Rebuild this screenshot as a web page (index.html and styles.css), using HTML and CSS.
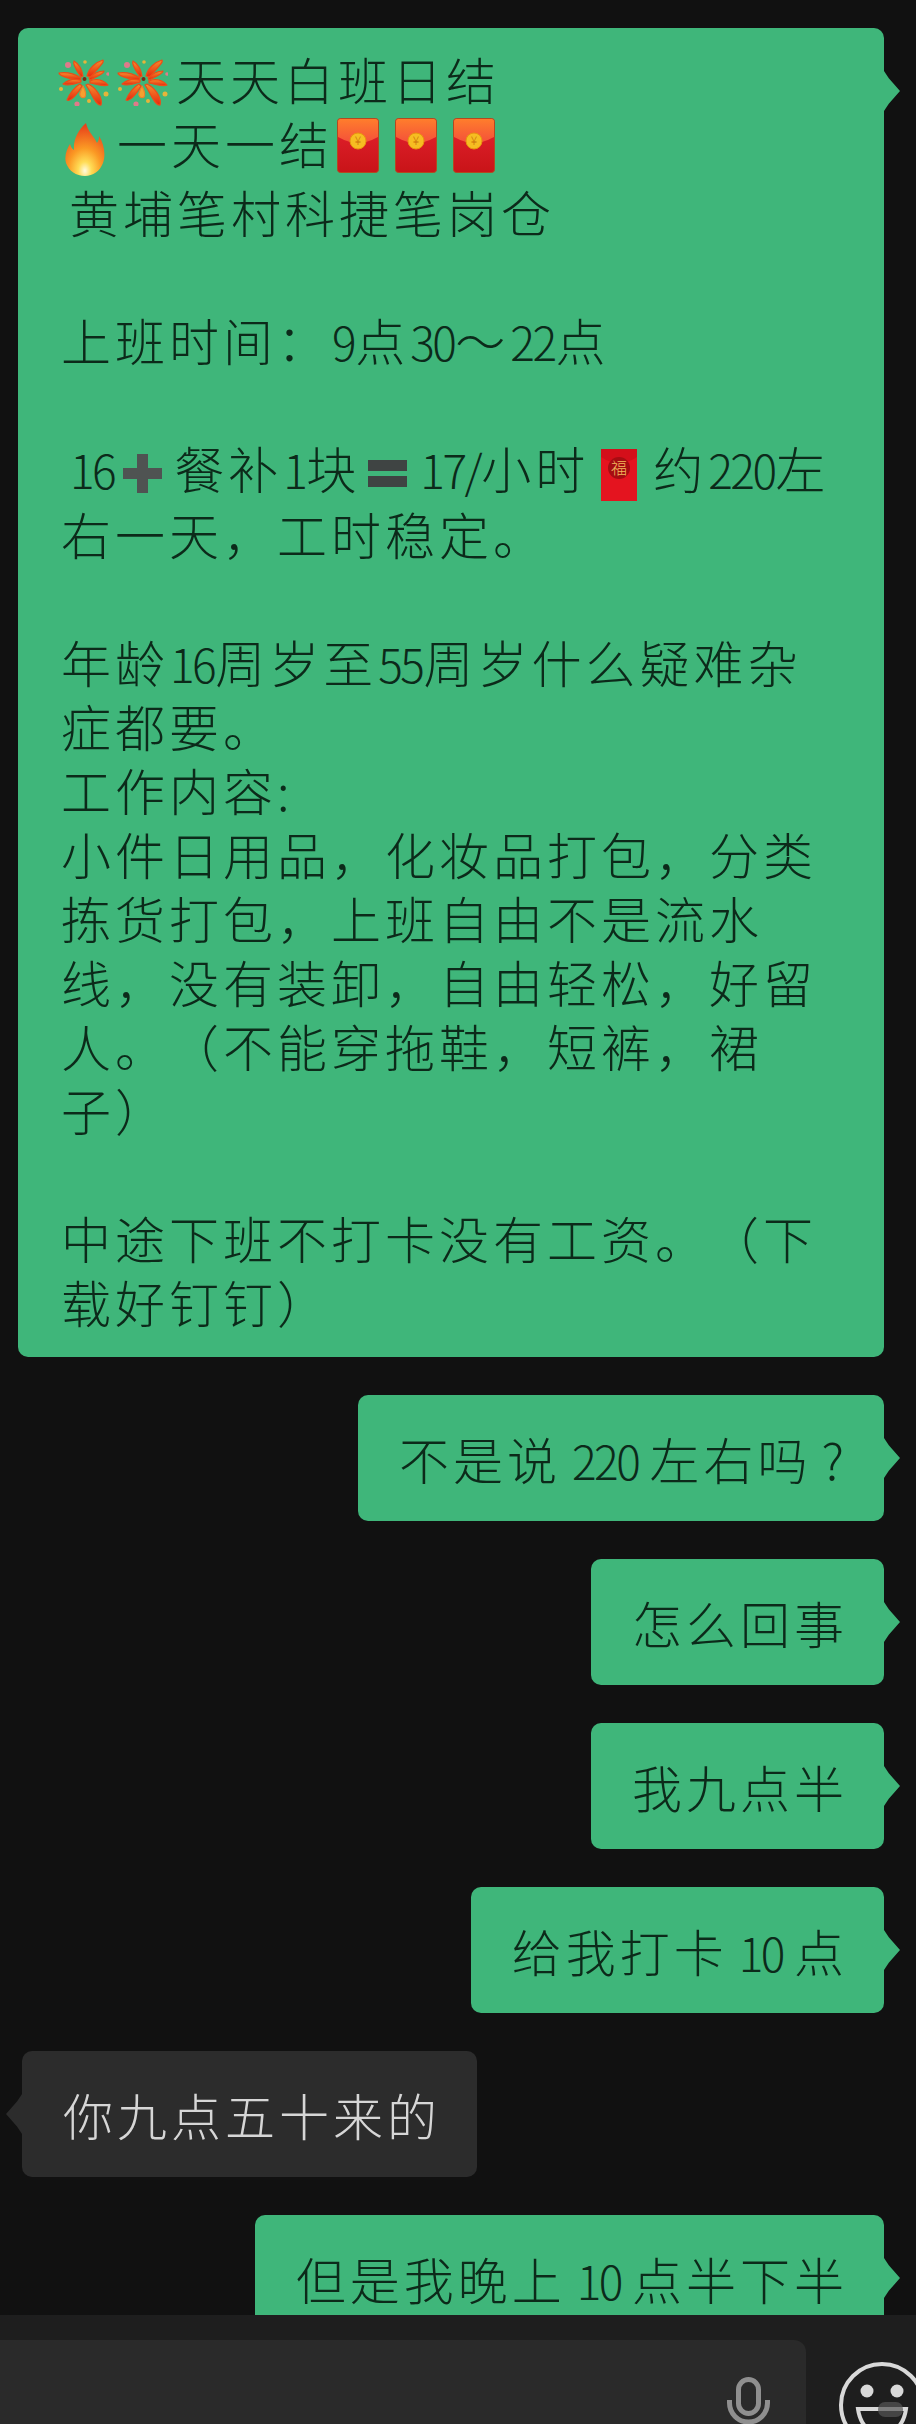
FILE: index.html
```html
<!DOCTYPE html>
<html lang="zh-CN">
<head>
<meta charset="utf-8" />
<meta name="viewport" content="width=device-width, initial-scale=1" />
<title>聊天</title>
<link rel="stylesheet" href="styles.css">
</head>
<body>
<svg class="defs" width="0" height="0" aria-hidden="true">
<defs>
<linearGradient id="petal" x1="0" y1="0" x2="0" y2="1">
<stop offset="0" stop-color="#f7902c"/>
<stop offset="1" stop-color="#e5260f"/>
</linearGradient>
<radialGradient id="fire" cx="0.5" cy="0.9" r="0.85">
<stop offset="0" stop-color="#fffbe0"/>
<stop offset="0.2" stop-color="#ffdc55"/>
<stop offset="0.5" stop-color="#fb9a24"/>
<stop offset="1" stop-color="#e8421b"/>
</radialGradient>
<linearGradient id="flap" x1="0" y1="0" x2="0" y2="1">
<stop offset="0" stop-color="#ff7d2c"/>
<stop offset="1" stop-color="#f4503a"/>
</linearGradient>
<linearGradient id="pocket" x1="0" y1="0" x2="0" y2="1">
<stop offset="0" stop-color="#e5222f"/>
<stop offset="1" stop-color="#c81418"/>
</linearGradient>
<symbol id="fireworks" viewBox="0 0 51 47">
<g fill="url(#petal)" stroke="#ec4d18" stroke-width="1.200" stroke-linejoin="round">
<path d="M29 17C31 9 38 3 45 1C47 4 39 9 33 18Z"/>
<path d="M31 19C35 15 41 12 46 12C46 15 38 18 32 21Z"/>
<path d="M32 22C38 19 46 21 50 26C46 28 39 25 32 24Z"/>
<path d="M30 25C37 28 45 38 43 46C38 47 34 35 28 26Z"/>
<path d="M25 27C27 31 29 35 27 38C24 40 21 37 22 34C23 31 24 29 25 27Z" fill="#f5a030" stroke="#f0802a"/>
<path d="M22 25C17 28 12 34 9 41C13 43 20 34 24 27Z"/>
<path d="M23 21C17 19 10 21 5 25C9 27 17 25 23 23Z"/>
<path d="M23 19C17 15 8 13 1 14C2 18 14 20 22 21Z"/>
<path d="M25 17C24 11 21 5 16 2C14 5 19 12 23 18Z"/>
</g>
<circle cx="26.500" cy="20" r="2" fill="#7a2a14"/>
<g fill="#e07a8a">
<circle cx="10" cy="6" r="3"/>
<circle cx="19" cy="45" r="2.600"/>
<circle cx="50" cy="15" r="1.800"/>
</g>
<g fill="#e5b53a">
<circle cx="27" cy="3" r="1.800"/>
<circle cx="3" cy="30" r="2"/>
<circle cx="48" cy="35" r="2.500"/>
<circle cx="31" cy="42" r="2"/>
</g>
</symbol>
<symbol id="flame" viewBox="0 0 40 53">
<path d="M21 0C23 9 29 13 32 20C34 17 34 15 34 13C39 21 41 31 38 40C35 48 28 53 20 53C11 53 4 48 1 40C-1 33 2 26 5 21C6 24 7 26 9 27C8 17 13 7 21 0Z" fill="url(#fire)"/>
</symbol>
<symbol id="envelope" viewBox="0 0 42 55">
<rect x="0.500" y="0.500" width="41" height="54" rx="3" fill="url(#pocket)" stroke="#b4481f"/>
<path d="M1 3.500Q1 1 3.500 1H38.500Q41 1 41 3.500V19Q30 25 21 25Q12 25 1 19Z" fill="url(#flap)"/>
<circle cx="21" cy="23" r="8" fill="#f6bd22" stroke="#e8940f"/>
<text x="21" y="27" class="coin-mark">¥</text>
</symbol>
</defs>
</svg>

<main class="chat">
<div class="bubble bubble-me bubble-long">
<p class="msg">
<svg class="emoji firework"><use href="#fireworks"/></svg><svg class="emoji firework"><use href="#fireworks"/></svg>天天白班日结<br>
<svg class="emoji flame"><use href="#flame"/></svg>一天一结<svg class="emoji packet"><use href="#envelope"/></svg><svg class="emoji packet"><use href="#envelope"/></svg><svg class="emoji packet"><use href="#envelope"/></svg><br>
<span class="indent">黄埔笔村科捷笔岗仓</span><br>
<br>
上班时间：<span class="num">9</span>点<span class="num">30</span>～<span class="num">22</span>点<br>
<br>
<span class="indent"><span class="num">16</span></span><svg class="sign" viewBox="0 0 39 39"><path d="M14 0h11v14h14v11H25v14H14V25H0V14h14z" fill="#4f5352"/></svg>餐补<span class="num">1</span>块<svg class="sign" viewBox="0 0 39 39"><path d="M0 6h39v11H0zM0 22h39v11H0z" fill="#3f4443"/></svg><span class="num">17/</span>小时<svg class="emoji fu" viewBox="0 0 36 52"><rect width="36" height="52" fill="#e4141f"/><path d="M0 0H36V8Q18 20 0 8Z" fill="#d40f1a"/><circle cx="18" cy="19" r="11" fill="#a60d12"/><text x="18" y="25" class="fu-mark">福</text></svg>约<span class="num">220</span>左<br>
右一天，工时稳定。<br>
<br>
年龄<span class="num">16</span>周岁至<span class="num">55</span>周岁什么疑难杂<br>
症都要。<br>
工作内容:<br>
小件日用品，化妆品打包，分类<br>
拣货打包，上班自由不是流水<br>
线，没有装卸，自由轻松，好留<br>
人。（不能穿拖鞋，短裤，裙<br>
子）<br>
<br>
中途下班不打卡没有工资。（下<br>
载好钉钉）
</p>
</div>
<div class="bubble bubble-me"><p class="msg">不是说 <span class="num">220</span> 左右吗 ?</p></div>
<div class="bubble bubble-me"><p class="msg">怎么回事</p></div>
<div class="bubble bubble-me"><p class="msg">我九点半</p></div>
<div class="bubble bubble-me"><p class="msg">给我打卡 <span class="num">10</span> 点</p></div>
<div class="bubble bubble-them"><p class="msg">你九点五十来的</p></div>
<div class="bubble bubble-me"><p class="msg">但是我晚上 <span class="num">10</span> 点半下半</p></div>
</main>

<footer class="input-bar">
<div class="input-box">
<svg class="mic" viewBox="0 0 44 47" width="44" height="47"><rect x="11.500" y="2.500" width="20" height="34" rx="10"/><path d="M2.500 23v3a19 19 0 0 0 38 0v-3"/></svg>
</div>
<svg class="smile" viewBox="0 0 86 86" width="86" height="86">
<circle cx="43" cy="43" r="41"/>
<circle class="eye" cx="28" cy="29" r="6.500"/>
<circle class="eye" cx="58" cy="29" r="6.500"/>
<path d="M19 47H67C65 62 56 72 43 72C30 72 21 62 19 47Z"/>
<rect class="smudge" x="39" y="40" width="25" height="15" rx="7"/>
</svg>
</footer>
</body>
</html>
```

FILE: styles.css
```css
:root {
  --color-bg: #111111;
  --color-me: #3fb67a;
  --color-them: #2c2c2c;
  --color-bar: #1e1e1e;
  --color-input: #2a2a2a;
}
* {
  box-sizing: border-box;
}
html, body {
  height: 100%;
}
body {
  margin: 0;
  height: 2424px;
  overflow: hidden;
  display: flex;
  flex-direction: column;
  background-color: var(--color-bg);
  font-family: "Noto Sans CJK TC", "Noto Sans CJK SC", sans-serif;
  font-weight: 300;
}
.defs {
  position: absolute;
}
.chat {
  flex: 1;
  min-height: 0;
  overflow: hidden;
  display: flex;
  flex-direction: column;
  align-items: flex-start;
  gap: 38px;
  padding-top: 28px;
}
.bubble {
  position: relative;
  flex: none;
  display: flex;
  align-items: center;
  min-height: 126px;
  padding: 18px 36px 18px 41px;
  border-radius: 10px;
}
.bubble::after {
  content: "";
  position: absolute;
  top: 43px;
  width: 16px;
  height: 40px;
  background: inherit;
}
.bubble-me {
  align-self: flex-end;
  margin-right: 32px;
  background-color: var(--color-me);
  color: #0c2a1a;
}
.bubble-me::after {
  left: 100%;
  clip-path: polygon(0 0, 30% 18%, 100% 50%, 30% 82%, 0 100%);
}
.bubble-them {
  margin-left: 22px;
  background-color: var(--color-them);
  color: #d6d6d6;
}
.bubble-them::after {
  right: 100%;
  clip-path: polygon(100% 0, 70% 18%, 0 50%, 70% 82%, 100% 100%);
}
.bubble-long {
  width: 866px;
  padding: 18px 36px 24px 43px;
}
.msg {
  margin: 0;
  font-size: 50px;
  line-height: 64px;
  letter-spacing: 4px;
  word-spacing: -5px;
  white-space: nowrap;
  text-spacing-trim: space-all;
}
.num {
  display: inline-block;
  margin: 0 1px;
  font-size: 46px;
  line-height: 1;
  letter-spacing: -2.500px;
}
.indent {
  display: inline-block;
  margin-left: 8px;
  line-height: 1;
}
.emoji {
  display: inline-block;
}
.firework {
  width: 51px;
  height: 47px;
  margin: 0 8px 0 -3px;
  vertical-align: -6px;
}
.firework + .firework {
  margin-left: 0;
}
.flame {
  width: 40px;
  height: 53px;
  margin: 0 12px 0 4px;
  vertical-align: -12px;
}
.packet {
  width: 42px;
  height: 55px;
  margin: 0 16px 6px 0;
  vertical-align: -15px;
}
.flame + .packet {
  margin-left: 4px;
}
.fu {
  width: 36px;
  height: 52px;
  margin: 0 16px 0 12px;
  vertical-align: -12px;
}
.sign {
  width: 39px;
  height: 39px;
  margin: 0 12px 0 8px;
  vertical-align: -4px;
}
.coin-mark {
  font-size: 12px;
  text-anchor: middle;
  fill: #c9720a;
  letter-spacing: 0;
}
.fu-mark {
  font-size: 16px;
  text-anchor: middle;
  fill: #f2b95c;
  letter-spacing: 0;
}
.input-bar {
  flex: none;
  height: 109px;
  overflow: hidden;
  display: flex;
  align-items: flex-start;
  padding-top: 25px;
  background-color: var(--color-bar);
}
.input-box {
  flex: none;
  display: flex;
  justify-content: flex-end;
  width: 826px;
  height: 110px;
  margin-left: -20px;
  padding: 37px 35px 0 0;
  border-radius: 12px;
  background-color: var(--color-input);
}
.mic {
  fill: none;
  stroke: #8f8f8f;
  stroke-width: 5;
}
.smile {
  flex: none;
  margin: 22px 0 0 33px;
  fill: none;
  stroke: #d9d9d9;
  stroke-width: 4;
}
.smile .eye {
  fill: #d9d9d9;
  stroke: none;
}
.smile .smudge {
  fill: #555555;
  stroke: none;
  opacity: 0.7;
}
```
